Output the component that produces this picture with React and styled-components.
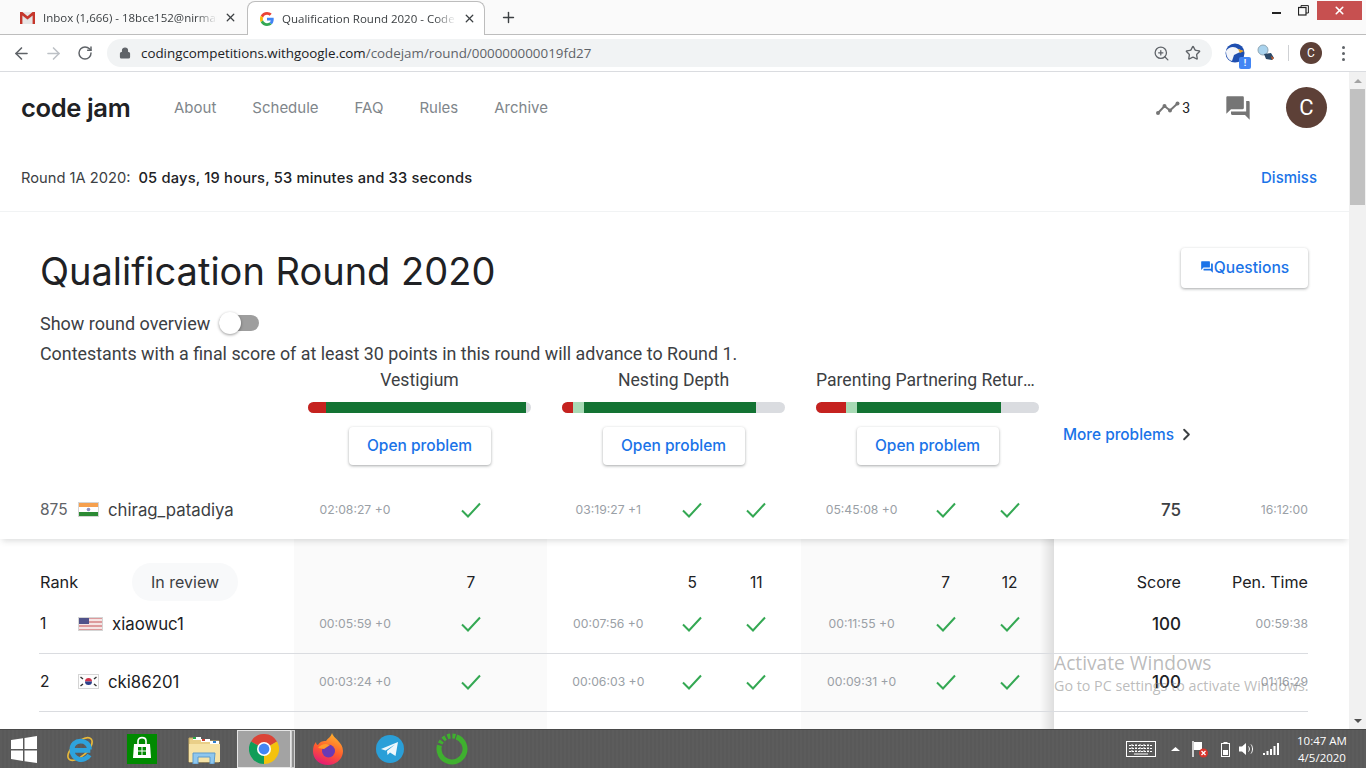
import React from "react";
import styled, { createGlobalStyle } from "styled-components";
import { ArrowLeft, ArrowRight, RotateCw, ZoomIn, Star, ChevronRight, X, Plus, Lock } from "lucide-react";

const GlobalStyle = createGlobalStyle`
  html, body { margin: 0; padding: 0; overflow: hidden; background: #fff; }
  * { box-sizing: border-box; }
`;

const SANS = `"Inter", "Roboto", sans-serif`;
const BODY = `"Roboto", sans-serif`;
const UI = `"Open Sans", "Liberation Sans", sans-serif`;

const FORUM = "M21 6h-2v9H6v2c0 .55.45 1 1 1h11l4 4V7c0-.55-.45-1-1-1zm-4 6V3c0-.55-.45-1-1-1H3c-.55 0-1 .45-1 1v14l4-4h10c.55 0 1-.45 1-1z";

const Check = () => (
  <CheckSvg viewBox="0 0 20 16">
    <path d="M1 8.5 L7 14.5 L19 1.5" fill="none" stroke="#34a853" strokeWidth="2" />
  </CheckSvg>
);

const GoogleG = () => (
  <svg width="14" height="14" viewBox="0 0 48 48">
    <path fill="#EA4335" d="M24 9.5c3.54 0 6.71 1.22 9.21 3.6l6.85-6.85C35.9 2.38 30.47 0 24 0 14.62 0 6.51 5.38 2.56 13.22l7.98 6.19C12.43 13.72 17.74 9.5 24 9.5z" />
    <path fill="#4285F4" d="M46.98 24.55c0-1.57-.15-3.09-.38-4.55H24v9.02h12.94c-.58 2.96-2.26 5.48-4.78 7.18l7.73 6c4.51-4.18 7.09-10.36 7.09-17.65z" />
    <path fill="#FBBC05" d="M10.53 28.59c-.48-1.45-.76-2.99-.76-4.59s.27-3.14.76-4.59l-7.98-6.19C.92 16.46 0 20.12 0 24c0 3.88.92 7.54 2.56 10.78l7.97-6.19z" />
    <path fill="#34A853" d="M24 48c6.48 0 11.93-2.13 15.89-5.81l-7.73-6c-2.15 1.45-4.92 2.3-8.16 2.3-6.26 0-11.57-4.22-13.47-9.91l-7.98 6.19C6.51 42.62 14.62 48 24 48z" />
  </svg>
);

const GmailM = () => (
  <svg width="15" height="12" viewBox="0 0 15 12">
    <rect x="0" y="0" width="15" height="12" fill="#e6e6e6" />
    <path d="M0 0 L7.5 6 L15 0 L15 2.5 L7.5 8.5 L0 2.5 Z" fill="#d8d8d8" />
    <path d="M0 0 H2.4 L7.5 4.2 L12.6 0 H15 V12 H12.6 V3.4 L7.5 7.4 L2.4 3.4 V12 H0 Z" fill="#c5362b" />
  </svg>
);

const EagleExt = () => (
  <ExtWrap>
    <svg width="20" height="20" viewBox="0 0 20 20">
      <circle cx="10" cy="10" r="9.5" fill="#1f4fb0" />
      <path d="M1 8 C4 3 10 3 13 6 L18 8 L13 10 L9 12 L7 18 C3 17 1 13 1 8 Z" fill="#f3f5fa" />
      <path d="M13 6 L19 8 L15 10 Z" fill="#e8a020" />
    </svg>
    <ExtBadge>!</ExtBadge>
  </ExtWrap>
);

const SearchExt = () => (
  <svg width="18" height="18" viewBox="0 0 18 18">
    <circle cx="6" cy="6" r="5" fill="#a9d3ee" stroke="#8fa7b5" />
    <path d="M7 10 L14 9 L17 14 L15 16 L9 15 Z" fill="#2b4a6a" />
    <path d="M14 12 L17 14 L15 16 Z" fill="#c75a28" />
  </svg>
);

const Trending = () => (
  <svg width="24" height="14" viewBox="0 0 24 14">
    <path d="M2 12 L8.5 5 L14 9.5 L21.5 2.5" fill="none" stroke="#757575" strokeWidth="2" />
    <circle cx="2" cy="12" r="2" fill="#757575" />
    <circle cx="8.5" cy="5" r="2" fill="#757575" />
    <circle cx="14" cy="9.5" r="2" fill="#757575" />
    <circle cx="21.5" cy="2.5" r="2" fill="#757575" />
  </svg>
);

const Flag = ({ kind }) => {
  if (kind === "in") {
    return (
      <FlagSvg width="21" height="15" viewBox="0 0 21 15">
        <rect width="21" height="5" fill="#f6a04e" />
        <rect y="5" width="21" height="5" fill="#fff" />
        <rect y="10" width="21" height="5" fill="#2c8a34" />
        <circle cx="10.5" cy="7.5" r="1.8" fill="#8d90c4" />
      </FlagSvg>
    );
  }
  if (kind === "us") {
    return (
      <FlagSvg width="25" height="14" viewBox="0 0 25 14">
        <rect width="25" height="14" fill="#dd9a9c" />
        {[2, 6, 10].map((y) => (
          <rect key={y} y={y} width="25" height="2" fill="#f5e4e4" />
        ))}
        <rect width="11" height="7" fill="#50528a" />
      </FlagSvg>
    );
  }
  return (
    <FlagSvg width="21" height="15" viewBox="0 0 21 15">
      <rect width="21" height="15" fill="#fdfdfd" />
      <path d="M7 7.5 a3.5 3.5 0 0 1 7 0 Z" fill="#d0344a" />
      <path d="M7 7.5 a3.5 3.5 0 0 0 7 0 Z" fill="#2a3f8a" />
      <path d="M2.5 3 L5 5 M2.5 12 L5 10 M18.5 3 L16 5 M18.5 12 L16 10" stroke="#333" strokeWidth="1.4" />
    </FlagSvg>
  );
};

const problems = [
  { name: "Vestigium", segs: [["#c5221f", 18], ["#137333", 200]], single: true },
  { name: "Nesting Depth", segs: [["#c5221f", 11], ["#a8dab5", 11], ["#137333", 172]] },
  { name: "Parenting Partnering Returns", segs: [["#c5221f", 30], ["#a8dab5", 11], ["#137333", 144]] },
];

const rows = [
  { rank: "1", flag: "us", name: "xiaowuc1", times: ["00:05:59 +0", "00:07:56 +0", "00:11:55 +0"], score: "100", pen: "00:59:38" },
  { rank: "2", flag: "kr", name: "cki86201", times: ["00:03:24 +0", "00:06:03 +0", "00:09:31 +0"], score: "100", pen: "01:16:29" },
];

const ProblemCells = ({ times, shaded }) =>
  problems.map((p, i) => (
    <ScoreCell key={p.name} $shade={shaded && i !== 1} $edge={shaded && i === 2} $single={p.single}>
      <Time>{times[i]}</Time>
      <Mid><Check /></Mid>
      {!p.single && <Mid><Check /></Mid>}
    </ScoreCell>
  ));

const headCounts = [["7"], ["5", "11"], ["7", "12"]];

export default function App() {
  return (
    <Page>
      <GlobalStyle />

      <TabStrip>
        <Tab>
          <TabIcon $w={23}><GmailM /></TabIcon>
          <TabTitle>Inbox (1,666) - 18bce152@nirmauni.ac.in</TabTitle>
          <X size={13} color="#3c4043" strokeWidth={2.4} />
        </Tab>
        <Tab $active>
          <TabIcon $w={22}><GoogleG /></TabIcon>
          <TabTitle>Qualification Round 2020 - Code Jam</TabTitle>
          <X size={13} color="#3c4043" strokeWidth={2.4} />
        </Tab>
        <NewTab><Plus size={17} color="#3c4043" strokeWidth={2} /></NewTab>
        <WindowControls>
          <WinButton>
            <svg width="10" height="10" viewBox="0 0 10 10"><rect y="6" width="9" height="2" fill="#222" /></svg>
          </WinButton>
          <WinButton>
            <svg width="11" height="11" viewBox="0 0 11 11" fill="none" stroke="#222"><rect x="0.5" y="2.5" width="7.5" height="7.5" strokeWidth="1.2" /><path d="M3 2.5 V0.6 H10.4 V8 H8" /></svg>
          </WinButton>
          <CloseButton><X size={13} color="#fff" strokeWidth={3} /></CloseButton>
        </WindowControls>
      </TabStrip>

      <Toolbar>
        <NavIcon><ArrowLeft size={19} color="#5f6368" strokeWidth={2} /></NavIcon>
        <NavIcon><ArrowRight size={19} color="#bdc1c6" strokeWidth={2} /></NavIcon>
        <NavIcon><RotateCw size={16} color="#5f6368" strokeWidth={2.2} /></NavIcon>
        <Omnibox>
          <Lock size={12} color="#5f6368" fill="#5f6368" strokeWidth={2.4} />
          <Url>codingcompetitions.withgoogle.com<UrlPath>/codejam/round/000000000019fd27</UrlPath></Url>
          <OmniActions>
            <ZoomIn size={17} color="#5f6368" strokeWidth={1.8} />
            <Star size={16} color="#5f6368" strokeWidth={2} />
          </OmniActions>
        </Omnibox>
        <Extensions>
          <EagleExt />
          <SearchExt />
          <Separator />
          <SmallAvatar>C</SmallAvatar>
          <Dots><i /><i /><i /></Dots>
        </Extensions>
      </Toolbar>

      <Body>
        <Main>
          <SiteHeader>
            <Logo>code jam</Logo>
            <Nav>
              <NavLink>About</NavLink>
              <NavLink>Schedule</NavLink>
              <NavLink>FAQ</NavLink>
              <NavLink>Rules</NavLink>
              <NavLink>Archive</NavLink>
            </Nav>
            <HeaderRight>
              <TrendBox><Trending /><TrendCount>3</TrendCount></TrendBox>
              <svg width="28" height="28" viewBox="0 0 24 24"><path fill="#757575" d={FORUM} /></svg>
              <Avatar>C</Avatar>
            </HeaderRight>
          </SiteHeader>

          <Notice>
            <NoticeText>Round 1A 2020:<strong>05 days, 19 hours, 53 minutes and 33 seconds</strong></NoticeText>
            <Dismiss>Dismiss</Dismiss>
          </Notice>

          <Intro>
            <TitleRow>
              <Title>Qualification Round 2020</Title>
              <QuestionsButton>
                <svg width="14" height="14" viewBox="0 0 24 24"><path fill="#1a73e8" d={FORUM} /></svg>
                Questions
              </QuestionsButton>
            </TitleRow>
            <ToggleRow>
              <span>Show round overview</span>
              <ToggleTrack><ToggleKnob /></ToggleTrack>
            </ToggleRow>
            <Lead>Contestants with a final score of at least 30 points in this round will advance to Round 1.</Lead>
          </Intro>

          <ProblemList>
            {problems.map((p) => (
              <Problem key={p.name}>
                <ProblemName>{p.name}</ProblemName>
                <Bar>
                  {p.segs.map(([color, w]) => (
                    <Seg key={color} $color={color} $w={w} />
                  ))}
                </Bar>
                <OpenButton>Open problem</OpenButton>
              </Problem>
            ))}
            <MoreProblems>More problems <ChevronRight size={19} color="#3c4043" strokeWidth={2.4} /></MoreProblems>
          </ProblemList>

          <OwnRow>
            <Grid>
              <Who>
                <Rank $muted>875</Rank>
                <Flag kind="in" />
                <Handle $muted>chirag_patadiya</Handle>
              </Who>
              <ProblemCells times={["02:08:27 +0", "03:19:27 +1", "05:45:08 +0"]} />
              <ScoreValue $muted>75</ScoreValue>
              <Pen>16:12:00</Pen>
            </Grid>
          </OwnRow>

          <Table>
            <HeadRow>
              <Who>
                <RankHead>Rank</RankHead>
                <ReviewPill>In review</ReviewPill>
              </Who>
              {headCounts.map((counts, i) => (
                <HeadCell key={i} $shade={i !== 1} $edge={i === 2} $single={counts.length === 1}>
                  <span />
                  {counts.map((c) => <Mid key={c}>{c}</Mid>)}
                </HeadCell>
              ))}
              <ScoreHead>Score</ScoreHead>
              <ScoreHead>Pen. Time</ScoreHead>
            </HeadRow>
            {rows.map((r) => (
              <Row key={r.rank}>
                <Who>
                  <Rank>{r.rank}</Rank>
                  <Flag kind={r.flag} />
                  <Handle>{r.name}</Handle>
                </Who>
                <ProblemCells times={r.times} shaded />
                <ScoreValue>{r.score}</ScoreValue>
                <Pen>{r.pen}</Pen>
              </Row>
            ))}
            <Row>
              <Who />
              <ScoreCell $shade />
              <ScoreCell />
              <ScoreCell $shade $edge />
            </Row>
          </Table>

          <Watermark>
            <WatermarkTitle>Activate Windows</WatermarkTitle>
            <WatermarkText>Go to PC settings to activate Windows.</WatermarkText>
          </Watermark>
        </Main>

        <Scrollbar>
          <ScrollArrow $up />
          <ScrollThumb />
          <ScrollSpacer />
          <ScrollArrow />
        </Scrollbar>
      </Body>

      <Taskbar>
        <StartIcon>
          <svg width="26" height="27" viewBox="0 0 26 27" fill="#fff">
            <path d="M0 4 L12 2.2 V13 H0 Z M13.5 2 L26 0 V13 H13.5 Z M0 14.5 H12 V25 L0 23 Z M13.5 14.5 H26 V27 L13.5 25.2 Z" />
          </svg>
        </StartIcon>
        <TaskIcon $x={28}>
          <svg width="30" height="32" viewBox="0 0 32 32">
            <ellipse cx="16" cy="16" rx="16" ry="7.5" transform="rotate(-42 16 16)" fill="none" stroke="#e8b93a" strokeWidth="1.8" />
            <path d="M7 17.5 H27 M7.5 17.5 C6.5 4.5 26 4.5 26 16.5 M7.5 16 C7 29 21.5 30 26 22.5" fill="none" stroke="#2ea3dd" strokeWidth="5.2" />
          </svg>
        </TaskIcon>
        <TaskIcon $x={32}>
          <svg width="30" height="30" viewBox="0 0 30 30">
            <rect width="30" height="30" fill="#008a00" />
            <path d="M7 10 H23 L24 24 H6 Z" fill="#fff" />
            <path d="M11 10 V7 C11 2.5 19 2.5 19 7 V10" fill="none" stroke="#fff" strokeWidth="1.6" />
            <path d="M11 13 H14.5 V16.5 H11 Z M15.5 13 H19 V16.5 H15.5 Z M11 17.5 H14.5 V21 H11 Z M15.5 17.5 H19 V21 H15.5 Z" fill="#008a00" />
          </svg>
        </TaskIcon>
        <TaskIcon $x={31}>
          <svg width="33" height="30" viewBox="0 0 33 30">
            <path d="M1 4 H12 L14 7 H31 V28 H1 Z" fill="#e9cf88" stroke="#c8ac62" />
            <rect x="5" y="3" width="8" height="3" fill="#fff" />
            <rect x="5" y="3" width="3" height="2" fill="#2aa84a" />
            <rect x="13" y="5" width="9" height="3" fill="#fff" />
            <rect x="14" y="5" width="3" height="2" fill="#c8402f" />
            <rect x="22" y="7" width="9" height="3" fill="#fff" />
            <rect x="25" y="7" width="3" height="2" fill="#2c7fd0" />
            <path d="M1 10 H32 V28 H1 Z" fill="#f6e3a6" />
            <path d="M5 19 H27 L26 30 H22 V23 H10 V30 H5 Z" fill="#8ec7ee" stroke="#5c9bcc" />
          </svg>
        </TaskIcon>
        <ActiveTask>
          <svg width="30" height="30" viewBox="0 0 30 30">
            <path d="M15 15 L2 7.5 A15 15 0 0 1 28 7.5 Z" fill="#db4437" />
            <path d="M15 15 L28 7.5 A15 15 0 0 1 15 30 Z" fill="#f4c20d" />
            <path d="M15 15 L15 30 A15 15 0 0 1 2 7.5 Z" fill="#0f9d58" />
            <circle cx="15" cy="15" r="7" fill="#fff" />
            <circle cx="15" cy="15" r="5.4" fill="#4285f4" />
          </svg>
        </ActiveTask>
        <TaskSliver />
        <TaskIcon $x={18}>
          <svg width="30" height="32" viewBox="0 0 30 32">
            <defs>
              <linearGradient id="fx" x1="0.7" y1="0" x2="0.3" y2="1">
                <stop offset="0" stopColor="#ffb52c" />
                <stop offset="0.55" stopColor="#ff5a2e" />
                <stop offset="1" stopColor="#e3177a" />
              </linearGradient>
            </defs>
            <path d="M19 0 C20 5 30 9 30 18 C30 26 23 32 15 32 C6 32 0 26 0 18 C0 14 1 11 3 9 C3 11 4 12 5 12 C7 8 11 8 13 8 C15 5 18 4 19 0 Z" fill="url(#fx)" />
            <circle cx="15.5" cy="18" r="6.5" fill="#6a3ab5" />
            <path d="M5 15 C8 11 13 10 17 12 L11 16 Z" fill="#ff9a2c" />
          </svg>
        </TaskIcon>
        <TaskIcon $x={33}>
          <svg width="28" height="28" viewBox="0 0 28 28">
            <circle cx="14" cy="14" r="14" fill="#2a9fd8" />
            <path d="M5 14 L22 7 L19.5 21 L14 17.5 L11.5 20 L11 16 L19 9.5 L9.5 15.5 Z" fill="#eef7fc" />
          </svg>
        </TaskIcon>
        <TaskIcon $x={32}>
          <svg width="32" height="32" viewBox="0 0 32 32">
            <circle cx="16" cy="16" r="13" fill="none" stroke="#3fb02f" strokeWidth="5" strokeDasharray="60 2 3 2 3 2 3 2 3" transform="rotate(-70 16 16)" />
          </svg>
        </TaskIcon>
        <Tray>
          <TrayGlyph $gap={0} width="30" height="16" viewBox="0 0 30 16" fill="none" stroke="#fff">
            <rect x="0.5" y="0.5" width="29" height="15" />
            <path d="M3 4.5 H27 M3 7.5 H27 M3 10.5 H27 M6 3 V12 M10 3 V12 M14 3 V12 M18 3 V12 M22 3 V12" strokeDasharray="2 1" />
            <path d="M8 13 H22" />
          </TrayGlyph>
          <TrayGlyph $gap={15} width="9" height="6" viewBox="0 0 9 6"><path d="M0 5 L4.5 1 L9 5 Z" fill="#fff" /></TrayGlyph>
          <TrayGlyph $gap={12} width="16" height="17" viewBox="0 0 16 17">
            <path d="M1 0 V16" stroke="#fff" strokeWidth="1.4" />
            <path d="M2 1 H10 V9 H2 Z" fill="#fff" />
            <circle cx="11.5" cy="12" r="4.5" fill="#d9342b" />
            <path d="M9.5 10 L13.5 14 M13.5 10 L9.5 14" stroke="#fff" strokeWidth="1.3" />
          </TrayGlyph>
          <TrayGlyph $gap={13} width="9" height="15" viewBox="0 0 9 15" fill="none" stroke="#fff">
            <rect x="0.5" y="1.5" width="8" height="13" />
            <rect x="3" y="0.2" width="3" height="1.2" fill="#fff" />
            <rect x="2" y="8" width="5" height="5" fill="#fff" stroke="none" />
          </TrayGlyph>
          <TrayGlyph $gap={9} width="16" height="14" viewBox="0 0 16 14" fill="none" stroke="#fff">
            <path d="M0 4.5 H3 L7 1 V13 L3 9.5 H0 Z" fill="#fff" stroke="none" />
            <path d="M9.5 4.5 C10.7 6 10.7 8 9.5 9.5 M12 2.5 C14 5 14 9 12 11.5" />
          </TrayGlyph>
          <TrayGlyph $gap={8} width="16" height="12" viewBox="0 0 16 12" fill="#fff">
            <rect x="0" y="10" width="2" height="2" />
            <rect x="3.5" y="8" width="2" height="4" />
            <rect x="7" y="6" width="2" height="6" />
            <rect x="10.5" y="3" width="2" height="9" />
            <rect x="14" y="0" width="2" height="12" />
          </TrayGlyph>
          <Clock>
            <span>10:47 AM</span>
            <span>4/5/2020</span>
          </Clock>
        </Tray>
      </Taskbar>
    </Page>
  );
}

const Page = styled.div`
  width: 1366px;
  height: 768px;
  display: flex;
  flex-direction: column;
  overflow: hidden;
  font-family: ${SANS};
`;

/* browser chrome */
const TabStrip = styled.div`
  height: 35px;
  flex: none;
  display: flex;
  align-items: flex-end;
  background: #fafafa;
  border-bottom: 1px solid #bdbdbd;
  position: relative;
`;

const Tab = styled.div`
  display: flex;
  align-items: center;
  height: ${(p) => (p.$active ? "34px" : "33px")};
  width: ${(p) => (p.$active ? "238px" : "247px")};
  padding: ${(p) => (p.$active ? "0 8px 0 12px" : "0 10px 0 20px")};
  margin-bottom: ${(p) => (p.$active ? "-1px" : "0")};
  background: ${(p) => (p.$active ? "#fff" : "transparent")};
  border: ${(p) => (p.$active ? "1px solid #bdbdbd" : "none")};
  border-bottom: none;
  border-radius: 8px 8px 0 0;
  font-family: ${UI};
`;

const TabIcon = styled.span`
  display: flex;
  flex: none;
  width: ${(p) => p.$w}px;
`;

const TabTitle = styled.span`
  flex: 1;
  min-width: 0;
  overflow: hidden;
  white-space: nowrap;
  font-size: 11.5px;
  color: #3c4043;
  margin-right: 7px;
  -webkit-mask-image: linear-gradient(90deg, #000 88%, transparent);
  mask-image: linear-gradient(90deg, #000 88%, transparent);
`;

const NewTab = styled.div`
  display: flex;
  align-items: center;
  height: 33px;
  margin-left: 15px;
`;

const WindowControls = styled.div`
  position: absolute;
  top: 1px;
  right: 4px;
  display: flex;
  align-items: center;
`;

const WinButton = styled.div`
  width: 26px;
  height: 19px;
  display: flex;
  align-items: center;
  justify-content: center;
`;

const CloseButton = styled.div`
  width: 45px;
  height: 19px;
  margin-left: 1px;
  background: #c75050;
  display: flex;
  align-items: center;
  justify-content: center;
`;

const Toolbar = styled.div`
  height: 37px;
  flex: none;
  display: flex;
  align-items: center;
  padding-left: 5px;
  background: #fff;
  border-bottom: 1px solid #dadce0;
`;

const NavIcon = styled.div`
  width: 32px;
  display: flex;
  justify-content: center;
`;

const Omnibox = styled.div`
  width: 1105px;
  height: 28px;
  margin-left: 6px;
  padding: 0 11px 0 12px;
  display: flex;
  align-items: center;
  border-radius: 14px;
  background: #f1f3f4;
`;

const Url = styled.div`
  margin-left: 10px;
  flex: 1;
  font-family: ${UI};
  font-size: 13.36px;
  color: #202124;
  white-space: nowrap;
`;

const UrlPath = styled.span`
  color: #5f6368;
`;

const OmniActions = styled.div`
  display: flex;
  align-items: center;
  gap: 15px;
`;

const Extensions = styled.div`
  display: flex;
  align-items: center;
  margin-left: 13px;
  gap: 12px;
`;

const ExtWrap = styled.div`
  position: relative;
  width: 20px;
  height: 20px;
`;

const ExtBadge = styled.span`
  position: absolute;
  right: -6px;
  bottom: -6px;
  width: 12px;
  height: 12px;
  border-radius: 2px;
  background: #4285f4;
  color: #fff;
  font: 700 9px/12px ${BODY};
  text-align: center;
`;

const Separator = styled.div`
  width: 1px;
  height: 16px;
  margin-left: 1px;
  background: #cfd1d4;
`;

const SmallAvatar = styled.div`
  width: 22px;
  height: 22px;
  margin-left: -1px;
  border-radius: 50%;
  background: #5d4037;
  color: #fff;
  font: 400 12px/22px ${BODY};
  text-align: center;
`;

const Dots = styled.div`
  display: flex;
  flex-direction: column;
  gap: 3px;
  margin-left: 8px;
  i {
    width: 3px;
    height: 3px;
    border-radius: 50%;
    background: #5f6368;
  }
`;

/* page body */
const Body = styled.div`
  height: 657px;
  flex: none;
  display: flex;
`;

const Main = styled.div`
  position: relative;
  flex: 1;
  min-width: 0;
  overflow: hidden;
  background: #fff;
`;

const Scrollbar = styled.div`
  width: 17px;
  flex: none;
  display: flex;
  flex-direction: column;
  background: #f1f1f1;
`;

const ScrollArrow = styled.div`
  height: 17px;
  flex: none;
  display: flex;
  align-items: center;
  justify-content: center;
  &::before {
    content: "";
    border-left: 4px solid transparent;
    border-right: 4px solid transparent;
    ${(p) => (p.$up ? "border-bottom: 4px solid #a3a3a3;" : "border-top: 4px solid #505050;")}
  }
`;

const ScrollThumb = styled.div`
  height: 116px;
  margin: 0 1px;
  flex: none;
  background: #c1c1c1;
`;

const ScrollSpacer = styled.div`
  flex: 1;
`;

const SiteHeader = styled.header`
  height: 71px;
  display: flex;
  align-items: center;
  padding: 0 22px 0 21px;
`;

const Logo = styled.div`
  font-size: 25.6px;
  font-weight: 600;
  letter-spacing: -0.4px;
  color: #202124;
  width: 153px;
  white-space: nowrap;
`;

const Nav = styled.nav`
  display: flex;
  gap: 36px;
`;

const NavLink = styled.a`
  font-size: 15px;
  color: #80868b;
`;

const HeaderRight = styled.div`
  margin-left: auto;
  display: flex;
  align-items: center;
`;

const TrendBox = styled.div`
  display: flex;
  align-items: center;
  gap: 2px;
  margin-right: 34px;
`;

const TrendCount = styled.span`
  font: 400 14px ${BODY};
  color: #202124;
`;

const Avatar = styled.div`
  width: 41px;
  height: 41px;
  margin-left: 34px;
  border-radius: 50%;
  background: #5d4037;
  color: #fff;
  font: 400 22px/41px ${BODY};
  text-align: center;
`;

const Notice = styled.div`
  height: 69px;
  display: flex;
  align-items: center;
  justify-content: space-between;
  padding: 0 32px 0 21px;
  border-bottom: 1px solid #f1f3f4;
`;

const NoticeText = styled.div`
  font-size: 14.7px;
  padding-top: 1px;
  color: #3c4043;
  strong {
    margin-left: 8px;
    font-weight: 500;
    letter-spacing: 0.18px;
    color: #202124;
  }
`;

const Dismiss = styled.a`
  font-size: 15px;
  font-weight: 500;
  color: #1a73e8;
`;

const Intro = styled.section`
  padding: 36px 41px 0 40px;
`;

const TitleRow = styled.div`
  height: 40px;
  display: flex;
  align-items: center;
  justify-content: space-between;
`;

const Title = styled.h1`
  margin: 6px 0 0;
  font-size: 38px;
  font-weight: 400;
  color: #202124;
  white-space: nowrap;
`;

const QuestionsButton = styled.button`
  width: 127px;
  height: 40px;
  padding: 0 0 2px;
  display: flex;
  align-items: center;
  justify-content: center;
  border: none;
  border-radius: 4px;
  background: #fff;
  box-shadow: 0 1px 3px rgba(60, 64, 67, 0.45);
  font-family: ${SANS};
  font-size: 15.6px;
  font-weight: 500;
  color: #1a73e8;
`;

const ToggleRow = styled.div`
  height: 28px;
  margin-top: 22px;
  display: flex;
  align-items: center;
  font: 400 18px ${BODY};
  color: #3c4043;
  span {
    margin-top: -2px;
  }
`;

const ToggleTrack = styled.div`
  width: 40px;
  height: 16px;
  margin-left: 9px;
  margin-top: -2px;
  display: flex;
  align-items: center;
  border-radius: 8px;
  background: #9e9e9e;
`;

const ToggleKnob = styled.div`
  width: 22px;
  height: 22px;
  border-radius: 50%;
  background: #fff;
  box-shadow: 0 1px 3px rgba(0, 0, 0, 0.4);
`;

const Lead = styled.p`
  height: 28px;
  margin: 2px 0 0;
  font: 400 17.86px/28px ${BODY};
  color: #3c4043;
  white-space: nowrap;
`;

const ProblemList = styled.section`
  height: 122px;
  padding-left: 308px;
  display: flex;
  gap: 31px;
`;

const Problem = styled.div`
  width: 223px;
  display: flex;
  flex-direction: column;
  align-items: center;
`;

const ProblemName = styled.div`
  width: 100%;
  height: 24px;
  font: 400 17.6px/24px ${BODY};
  color: #3c4043;
  text-align: center;
  white-space: nowrap;
  overflow: hidden;
  text-overflow: ellipsis;
`;

const Bar = styled.div`
  width: 100%;
  height: 11px;
  margin-top: 10px;
  display: flex;
  overflow: hidden;
  border-radius: 6px;
  background: #dadce0;
`;

const Seg = styled.div`
  width: ${(p) => p.$w}px;
  background: ${(p) => p.$color};
`;

const OpenButton = styled.button`
  width: 142px;
  height: 38px;
  margin-top: 14px;
  padding: 0 0 2px;
  border: none;
  border-radius: 4px;
  background: #fff;
  box-shadow: 0 1px 3px rgba(60, 64, 67, 0.45);
  font-family: ${SANS};
  font-size: 15.5px;
  font-weight: 500;
  color: #1a73e8;
`;

const MoreProblems = styled.a`
  margin: 56px 0 0 -7px;
  height: 20px;
  display: flex;
  align-items: center;
  gap: 3px;
  white-space: nowrap;
  font-size: 15.4px;
  font-weight: 500;
  color: #1a73e8;
`;

const OwnRow = styled.div`
  position: relative;
  z-index: 1;
  height: 49px;
  padding: 0 41px 8px 39px;
  background: #fff;
  box-shadow: 0 4px 6px -2px rgba(60, 64, 67, 0.18);
`;

const Grid = styled.div`
  height: 100%;
  display: grid;
  grid-template-columns: 255px repeat(3, 253.33px) 127px 127px;
  align-items: center;
`;

const Table = styled.div`
  padding: 0 41px 0 39px;
`;

const HeadRow = styled(Grid)`
  height: 57px;
  align-items: stretch;
`;

const Row = styled(Grid)`
  height: 58px;
  align-items: stretch;
  border-bottom: 1px solid #dadce0;
`;

const Who = styled.div`
  padding: 0 0 2px 1px;
  display: flex;
  align-items: center;
  align-self: stretch;
`;

const Rank = styled.span`
  width: 38px;
  flex: none;
  font-size: 15.5px;
  color: ${(p) => (p.$muted ? "#5f6368" : "#202124")};
`;

const Handle = styled.span`
  margin-left: 9px;
  font-size: 16.8px;
  color: ${(p) => (p.$muted ? "#3c4043" : "#202124")};
`;

const FlagSvg = styled.svg`
  flex: none;
  outline: 1px solid #d5d5d5;
  outline-offset: -1px;
`;

const RankHead = styled.span`
  width: 92px;
  flex: none;
  padding-top: 24px;
  font-size: 16.3px;
  color: #202124;
`;

const ReviewPill = styled.span`
  width: 106px;
  height: 38px;
  margin-top: 24px;
  flex: none;
  border-radius: 19px;
  background: #f8f9fa;
  color: #3c4043;
  font-size: 16px;
  line-height: 38px;
  text-align: center;
  position: relative;
  z-index: 1;
`;

const ScoreCell = styled.div`
  padding-bottom: 2px;
  display: grid;
  grid-template-columns: ${(p) => (p.$single ? "122px 110px" : "122px 46px 82px")};
  align-items: center;
  align-self: stretch;
  background: ${(p) =>
    p.$edge
      ? "linear-gradient(90deg, #fafafa calc(100% - 14px), #dedede 100%)"
      : p.$shade
      ? "#fafafa"
      : "transparent"};
`;

const HeadCell = styled(ScoreCell)`
  padding: 23px 0 0;
  font-size: 15.5px;
  color: #202124;
`;

const Time = styled.span`
  font-size: 12.2px;
  color: #9aa0a6;
  text-align: center;
  white-space: nowrap;
`;

const Mid = styled.span`
  display: flex;
  justify-content: center;
`;

const CheckSvg = styled.svg`
  width: 20px;
  height: 16px;
`;

const ScoreHead = styled.div`
  padding-top: 21px;
  align-self: center;
  font-size: 16.1px;
  color: #202124;
  text-align: right;
  white-space: nowrap;
`;

const ScoreValue = styled.div`
  align-self: center;
  margin-bottom: 2px;
  font-size: 17px;
  font-weight: 500;
  color: ${(p) => (p.$muted ? "#3c4043" : "#202124")};
  text-align: right;
`;

const Pen = styled.div`
  align-self: center;
  margin-bottom: 2px;
  font-size: 12.2px;
  color: #9aa0a6;
  text-align: right;
`;

const Watermark = styled.div`
  position: absolute;
  left: 1054px;
  top: 579px;
  font-family: ${UI};
  color: rgba(130, 130, 130, 0.55);
  white-space: nowrap;
`;

const WatermarkTitle = styled.div`
  font-size: 19.2px;
  line-height: 24px;
`;

const WatermarkText = styled.div`
  margin-top: 2px;
  font-size: 14.3px;
  line-height: 18px;
`;

/* windows taskbar */
const Taskbar = styled.div`
  height: 39px;
  flex: none;
  display: flex;
  align-items: center;
  padding-left: 11px;
  background: repeating-linear-gradient(90deg, #5c5c5c 0, #5c5c5c 2px, #595959 2px, #595959 4px);
  border-top: 1px solid #4a4a4a;
`;

const StartIcon = styled.div`
  display: flex;
  width: 26px;
  flex: none;
`;

const TaskIcon = styled.div`
  display: flex;
  flex: none;
  margin-left: ${(p) => p.$x}px;
`;

const ActiveTask = styled.div`
  width: 54px;
  height: 38px;
  margin-left: 16px;
  display: flex;
  flex: none;
  align-items: center;
  justify-content: center;
  background: #a3a3a3;
  border: 1px solid #e6e6e6;
`;

const TaskSliver = styled.div`
  width: 4px;
  height: 38px;
  flex: none;
  background: #8f8f8f;
  border: 1px solid #d0d0d0;
`;

const Tray = styled.div`
  margin-left: auto;
  display: flex;
  align-items: center;
  padding-right: 19px;
`;

const TrayGlyph = styled.svg`
  flex: none;
  margin-left: ${(p) => p.$gap}px;
`;

const Clock = styled.div`
  width: 50px;
  margin-left: 18px;
  display: flex;
  flex-direction: column;
  align-items: center;
  font-family: ${UI};
  font-size: 11.5px;
  line-height: 17px;
  color: #fff;
  white-space: nowrap;
`;
